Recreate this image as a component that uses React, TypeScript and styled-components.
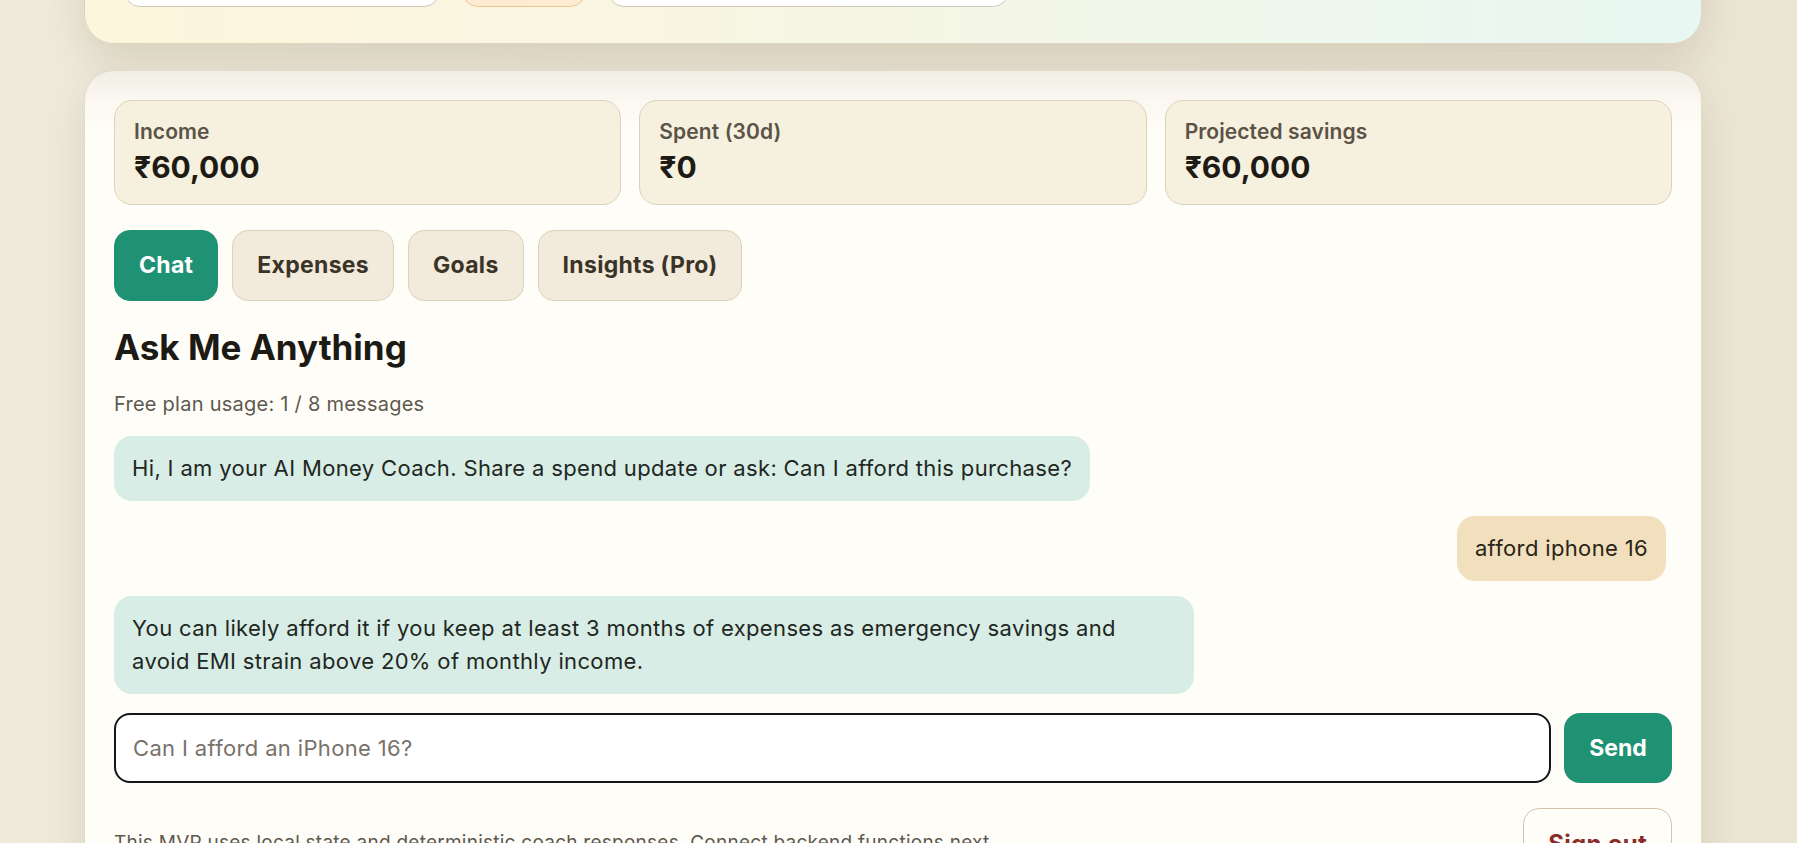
import React from "react";
import styled, { createGlobalStyle } from "styled-components";

const GlobalStyle = createGlobalStyle`
  * { box-sizing: border-box; }
  html {
    background: linear-gradient(90deg, #efeadb 0%, #ece6d6 50%, #ebe5d4 100%);
  }
  body {
    margin: 0;
    padding: 0;
    overflow: hidden;
    font-family: Inter, "Noto Sans", "DejaVu Sans", sans-serif;
    color: #1e1b15;
  }
`;

const Page = styled.div`
  display: flex;
  flex-direction: column;
  gap: 26px;
  margin-top: -76px;
  padding: 0 95px 0 84px;
`;

const TopPanel = styled.header`
  border: 1px solid #ddd5c0;
  border-radius: 30px;
  padding: 30px 36px 36px 39px;
  background: linear-gradient(90deg, #fdf5dc 0%, #f7f6e4 45%, #eef7ec 75%, #e7f7f2 100%);
  box-shadow: 0 16px 40px rgba(95, 80, 45, 0.16);
`;

const ControlRow = styled.div`
  display: flex;
  gap: 22px;
`;

const TopField = styled.input<{ $w: number; $accent?: boolean }>`
  width: ${(p) => p.$w}px;
  height: 52px;
  border-radius: 16px;
  border: 1px solid ${(p) => (p.$accent ? "#efc88f" : "#cfc8b8")};
  background: ${(p) => (p.$accent ? "linear-gradient(180deg, #fff6e2, #fdebd0)" : "#ffffff")};
  padding: 0 16px;
  font: 500 18px Inter, sans-serif;
  color: #2a2418;
`;

const MainPanel = styled.main`
  border: 1px solid #e2dbc9;
  border-radius: 30px;
  padding: 29px;
  background: linear-gradient(180deg, #f1eee5 0px, #faf8f1 30px, #fffdf7 60px);
  box-shadow: 0 16px 40px rgba(95, 80, 45, 0.14);
`;

const StatGrid = styled.div`
  display: grid;
  grid-template-columns: repeat(3, 1fr);
  gap: 18px;
`;

const StatCard = styled.div`
  display: flex;
  flex-direction: column;
  gap: 4px;
  padding: 18px 19px 19px;
  border: 1px solid #dcd2bb;
  border-radius: 18px;
  background: #f6f0df;
`;

const StatLabel = styled.span`
  font-size: 21px;
  line-height: 26px;
  font-weight: 600;
  letter-spacing: 0.1px;
  color: #5b5347;
`;

const StatValue = styled.span`
  font-size: 30px;
  line-height: 36px;
  font-weight: 700;
  color: #1e1b15;
`;

const TabBar = styled.nav`
  display: flex;
  gap: 14px;
  margin-top: 25px;
`;

const Tab = styled.button<{ $active?: boolean }>`
  padding: 19px 24px 20px;
  line-height: 30px;
  font-family: Inter, sans-serif;
  font-size: 23px;
  font-weight: 700;
  letter-spacing: 0.3px;
  border-radius: 16px;
  border: 1px solid ${(p) => (p.$active ? "#1f9274" : "#dcd2bc")};
  background: ${(p) => (p.$active ? "#1f9274" : "#f2eadb")};
  color: ${(p) => (p.$active ? "#ffffff" : "#3a3428")};
  cursor: pointer;
`;

const Heading = styled.h2`
  margin: 25px 0 0;
  font-size: 35px;
  line-height: 42px;
  font-weight: 700;
  color: #1c1a15;
`;

const Usage = styled.p`
  margin: 22px 0 0;
  font-size: 20px;
  line-height: 28px;
  letter-spacing: 0.25px;
  color: #5e594f;
`;

const MessageList = styled.div`
  display: flex;
  flex-direction: column;
  gap: 15px;
  margin-top: 18px;
`;

const Bubble = styled.div<{ $user?: boolean }>`
  align-self: ${(p) => (p.$user ? "flex-end" : "flex-start")};
  max-width: 1080px;
  padding: 16px 18px;
  margin-right: ${(p) => (p.$user ? "6px" : "0")};
  border-radius: 18px;
  font-size: 22px;
  line-height: 33px;
  letter-spacing: 0.35px;
  background: ${(p) => (p.$user ? "#f1dfbd" : "#d8ede5")};
  color: ${(p) => (p.$user ? "#2a2418" : "#1f2723")};
`;

const Composer = styled.form`
  display: flex;
  gap: 13px;
  margin-top: 19px;
`;

const ChatInput = styled.input`
  flex: 1;
  height: 70px;
  padding: 0 17px;
  border: 2px solid #161616;
  border-radius: 16px;
  background: #ffffff;
  font-family: Inter, sans-serif;
  font-size: 22px;
  letter-spacing: 0.35px;
  color: #1e1b15;
  outline: none;
  &::placeholder {
    color: #77726a;
  }
`;

const SendButton = styled.button`
  width: 108px;
  height: 70px;
  border: none;
  border-radius: 16px;
  background: #1f9274;
  color: #ffffff;
  font-family: Inter, sans-serif;
  font-size: 23px;
  font-weight: 700;
  cursor: pointer;
`;

const Footer = styled.footer`
  display: flex;
  align-items: center;
  justify-content: space-between;
  margin-top: 25px;
`;

const FooterNote = styled.p`
  margin: 0;
  font-size: 19px;
  line-height: 26px;
  letter-spacing: 0.25px;
  color: #5e594f;
`;

const SignOut = styled.button`
  height: 70px;
  padding: 0 24px;
  border: 1px solid #d7c3ad;
  border-radius: 16px;
  background: #fffdf7;
  color: #8a2d2a;
  font-family: Inter, sans-serif;
  font-size: 24px;
  font-weight: 700;
  letter-spacing: 0.3px;
  cursor: pointer;
`;

const stats = [
  { label: "Income", value: "₹60,000" },
  { label: "Spent (30d)", value: "₹0" },
  { label: "Projected savings", value: "₹60,000" },
];

const tabs = ["Chat", "Expenses", "Goals", "Insights (Pro)"];

const messages = [
  { user: false, text: "Hi, I am your AI Money Coach. Share a spend update or ask: Can I afford this purchase?" },
  { user: true, text: "afford iphone 16" },
  {
    user: false,
    text: "You can likely afford it if you keep at least 3 months of expenses as emergency savings and avoid EMI strain above 20% of monthly income.",
  },
];

export default function App() {
  return (
    <>
      <GlobalStyle />
      <Page>
        <TopPanel>
          <ControlRow>
            <TopField $w={316} defaultValue="60000" aria-label="Monthly income" />
            <TopField $w={124} $accent defaultValue="Free" aria-label="Plan" />
            <TopField $w={401} defaultValue="Save for emergency fund" aria-label="Goal" />
          </ControlRow>
        </TopPanel>
        <MainPanel>
          <StatGrid>
            {stats.map((s) => (
              <StatCard key={s.label}>
                <StatLabel>{s.label}</StatLabel>
                <StatValue>{s.value}</StatValue>
              </StatCard>
            ))}
          </StatGrid>
          <TabBar>
            {tabs.map((t, i) => (
              <Tab key={t} $active={i === 0}>
                {t}
              </Tab>
            ))}
          </TabBar>
          <Heading>Ask Me Anything</Heading>
          <Usage>Free plan usage: 1 / 8 messages</Usage>
          <MessageList>
            {messages.map((m, i) => (
              <Bubble key={i} $user={m.user}>
                {m.text}
              </Bubble>
            ))}
          </MessageList>
          <Composer onSubmit={(e) => e.preventDefault()}>
            <ChatInput placeholder="Can I afford an iPhone 16?" />
            <SendButton type="submit">Send</SendButton>
          </Composer>
          <Footer>
            <FooterNote>
              This MVP uses local state and deterministic coach responses. Connect backend functions next.
            </FooterNote>
            <SignOut>Sign out</SignOut>
          </Footer>
        </MainPanel>
      </Page>
    </>
  );
}
